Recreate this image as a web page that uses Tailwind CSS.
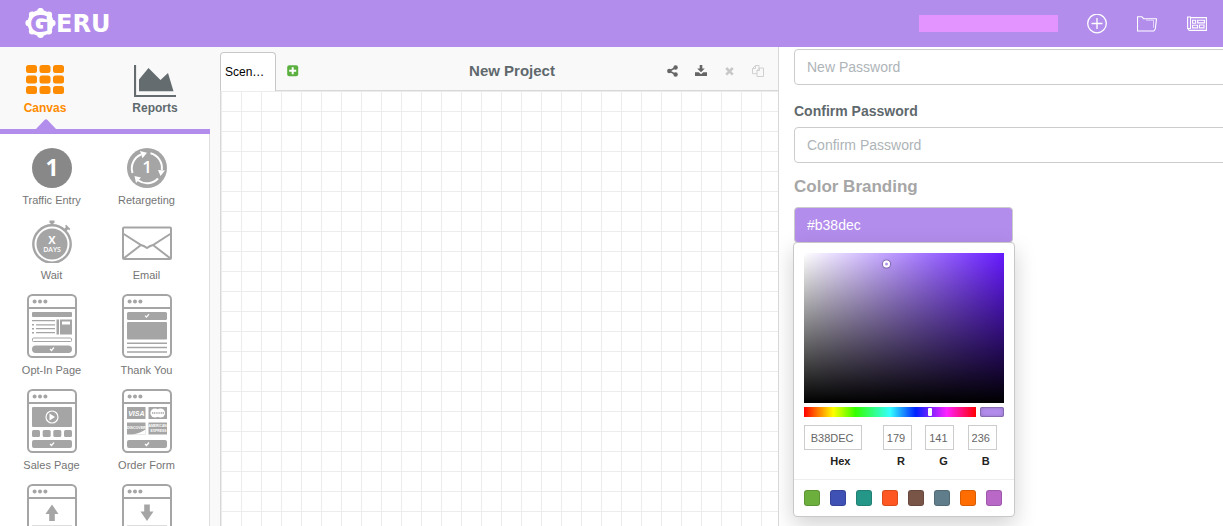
<!DOCTYPE html>
<html lang="en">
<head>
<meta charset="utf-8">
<title>Geru - New Project</title>
<script src="https://cdn.jsdelivr.net/npm/@tailwindcss/browser@4"></script>
</head>
<body class="flex h-screen flex-col overflow-hidden bg-white font-['Liberation_Sans',Arial,sans-serif] text-[#5f696d]">

<svg class="hidden" aria-hidden="true">
  <symbol id="frame" viewBox="0 0 50 64">
    <rect x="1" y="1" width="48" height="62" rx="4.5" fill="#fff" stroke="#a5a5a5" stroke-width="2"/>
    <path d="M1 14h48" stroke="#a5a5a5" stroke-width="2"/>
    <g fill="#a5a5a5"><circle cx="7.6" cy="7.6" r="2"/><circle cx="13" cy="7.6" r="2"/><circle cx="18.4" cy="7.6" r="2"/></g>
  </symbol>
</svg>

<header class="flex h-[47px] shrink-0 items-center bg-[#b38dec] pr-4 pl-6 text-white">
  <a href="#" aria-label="Geru home" class="flex">
    <svg width="96" height="32" viewBox="0 0 96 32" fill="#fff">
      <circle cx="16.500" cy="15" r="13"/>
      <circle cx="16.500" cy="3.200" r="3.300"/><circle cx="24.800" cy="6.700" r="3.300"/><circle cx="28.300" cy="15" r="3.300"/><circle cx="24.800" cy="23.300" r="3.300"/>
      <circle cx="16.500" cy="26.800" r="3.300"/><circle cx="8.200" cy="23.300" r="3.300"/><circle cx="4.700" cy="15" r="3.300"/><circle cx="8.200" cy="6.700" r="3.300"/>
      <g font-family="DejaVu Sans" font-weight="bold" font-size="24">
        <text x="6" y="23.500" font-size="23" fill="#b38dec">G</text>
        <text x="32" y="23.500">ERU</text>
      </g>
    </svg>
  </a>
  <div class="mr-[29px] ml-auto h-[17px] w-[139px] bg-[#e494ff]"></div>
  <nav class="flex items-center gap-[30px]">
    <button aria-label="New project">
      <svg width="20" height="20" viewBox="0 0 20 20" fill="none" stroke="#fff" stroke-width="1.300"><circle cx="10" cy="9.500" r="9.300"/><path d="M10 4v11M4.500 9.500h11"/></svg>
    </button>
    <button aria-label="Open project">
      <svg width="20" height="16" viewBox="0 0 20 16" fill="none" stroke="#fff" stroke-linejoin="round"><path d="M.5.800h4.500l1.700 2h12.800L18.300 13l-1.500 2H.5z" stroke-width="1.100"/><path d="M9 4.200h7.500v7.500" stroke-width="1" stroke-opacity=".6"/></svg>
    </button>
    <button aria-label="News">
      <svg width="20" height="16" viewBox="0 0 20 16" fill="none" stroke="#fff" stroke-width="1.100"><path d="M.6 1h2.900v11.500H.6zM3.500 1.600h15.900v12.800H2.200L.6 12.500M5.600 4.200h3v3h-3zM10.600 4.200h6.800v2.700h-6.800zM5.600 9.200h5v2.700h-5zM12.500 9h4.500v2.900h-4.500z"/></svg>
    </button>
  </nav>
</header>

<div class="flex min-h-0 flex-1">

  <aside class="w-[210px] shrink-0 overflow-hidden">
    <nav class="flex h-[87px] gap-5 border-b-[5px] border-[#b38dec] bg-[#f9f9f9] pt-[18px] text-xs leading-4 font-bold">
      <a href="#" class="flex w-[90px] flex-col items-center text-[#ff8c00]">
        <svg class="shrink-0" width="38" height="35" viewBox="0 0 38 35" fill="#ff8c00">
          <rect width="11" height="8" rx="2.500"/><rect x="13.500" width="11" height="8" rx="2.500"/><rect x="27" width="11" height="8" rx="2.500"/>
          <rect y="10.500" width="11" height="8" rx="2.500"/><rect x="13.500" y="10.500" width="11" height="8" rx="2.500"/><rect x="27" y="10.500" width="11" height="8" rx="2.500"/>
          <rect y="21" width="11" height="8" rx="2.500"/><rect x="13.500" y="21" width="11" height="8" rx="2.500"/><rect x="27" y="21" width="11" height="8" rx="2.500"/>
        </svg>
        Canvas
        <svg class="mt-[3px] shrink-0" width="22" height="10" viewBox="0 0 22 10" fill="#b38dec"><path d="M2 10 10.500 1q1.500-1.500 3 0L22 10z"/></svg>
      </a>
      <a href="#" class="flex w-[90px] flex-col items-center">
        <svg class="shrink-0" width="42" height="35" viewBox="0 0 42 35"><path d="M1 0v31h41" fill="none" stroke="#646c70" stroke-width="2.200"/><path d="M5 26.300V14.500L14.500 3l12 12L34 8l5.500 18.300z" fill="#646c70"/></svg>
        Reports
      </a>
    </nav>

    <ul class="grid grid-cols-[95px_95px] gap-y-[9px] border-r border-[#ddd] pt-[14px] pl-1 text-center text-[11px] leading-5 text-[#757575]">
      <li class="flex flex-col items-center gap-0.5">
        <svg width="40" height="40" viewBox="0 0 40 40"><circle cx="20" cy="20" r="20" fill="#888"/><text x="20" y="28" text-anchor="middle" font-family="Open Sans" font-weight="bold" font-size="23" fill="#fff">1</text></svg>
        Traffic Entry
      </li>
      <li class="flex flex-col items-center gap-0.5">
        <svg width="40" height="40" viewBox="0 0 40 40"><circle cx="20" cy="20" r="20" fill="#a5a5a5"/>
          <g fill="none" stroke="#fff" stroke-width="2"><path d="M5.500 25A15.200 15.200 0 0 1 14 6.500"/><path d="M23.500 5.200A15.200 15.200 0 0 1 34.800 22"/><path d="M31 30.500A15.200 15.200 0 0 1 11 32.300"/></g>
          <path d="M13 3l7 1.800-4.500 5.500zM31 22l7 .5-4.500 5.500zM7.500 28l6.500 1.500-5 5.500z" fill="#fff"/>
          <text x="20" y="25" text-anchor="middle" font-family="Open Sans" font-weight="600" font-size="17" fill="#fff">1</text></svg>
        Retargeting
      </li>
      <li class="flex flex-col items-center gap-0.5">
        <svg width="40" height="44" viewBox="0 0 40 44"><circle cx="20" cy="25" r="18.700" fill="none" stroke="#a5a5a5" stroke-width="2.400"/><circle cx="20" cy="25" r="15.500" fill="#a5a5a5"/><path d="M17.500 1.500h5v2.500h-1v3h-3V4h-1zM32 10l2-2-1-1 1.200-1.200 4.200 4.200-1.200 1.200-1-1-2 2z" fill="#a5a5a5"/>
          <g font-family="Open Sans" text-anchor="middle" fill="#fff"><text x="20" y="25" font-weight="bold" font-size="11">X</text><text x="20" y="33" font-weight="600" font-size="7">DAYS</text></g></svg>
        Wait
      </li>
      <li class="flex flex-col items-center gap-0.5">
        <svg width="50" height="44" viewBox="0 0 50 44" fill="none" stroke="#a5a5a5" stroke-width="2"><rect x="1" y="8.500" width="48" height="31.500" rx="1"/><path d="M1 14.500l18 11.500q3.500 1 6 3 2.500-2 6-3l18-11.500M1.500 39.500 19 26M48.500 39.500 31 26"/></svg>
        Email
      </li>
      <li class="flex flex-col items-center gap-0.5">
        <svg width="50" height="64" viewBox="0 0 50 64"><use href="#frame"/>
          <g fill="#a5a5a5"><rect x="5" y="18" width="40" height="5" rx="1"/><path d="M5 26h23v1.300H5zM9 30.200h19v1.300H9zM9 34h19v1.300H9zM9 38h19v1.300H9zM5 30h2v1.500H5zM5 34h2v1.500H5zM5 38h2v1.500H5zM29.500 25.500h2.500v15h-2.500zM33 25.500h12v15H33z"/><rect x="5" y="51.500" width="40" height="7.500" rx="3.700"/></g>
          <path d="M35 27.500h8v3h-8z" fill="#fff"/><rect x="5.500" y="44" width="39" height="3.500" rx="1" fill="none" stroke="#a5a5a5"/><path d="M23 55l1.500 1.500 2.500-3" fill="none" stroke="#fff" stroke-width="1.200"/></svg>
        Opt-In Page
      </li>
      <li class="flex flex-col items-center gap-0.5">
        <svg width="50" height="64" viewBox="0 0 50 64"><use href="#frame"/>
          <g fill="#a5a5a5"><rect x="5" y="18" width="40" height="8" rx="1.500"/><rect x="5" y="28" width="40" height="17.500" rx="1"/><path d="M5 48.500h40V50H5zM5 52.700h40v1.500H5zM5 57.300h40v1.500H5z"/></g><path d="M23 21.700l1.500 1.500 2.500-3" fill="none" stroke="#fff" stroke-width="1.200"/></svg>
        Thank You
      </li>
      <li class="flex flex-col items-center gap-0.5">
        <svg width="50" height="64" viewBox="0 0 50 64"><use href="#frame"/>
          <g fill="#a5a5a5"><rect x="5" y="18" width="40" height="20" rx="1"/><rect x="5" y="41" width="8" height="7" rx="1.500"/><rect x="15.700" y="41" width="8" height="7" rx="1.500"/><rect x="26.300" y="41" width="8" height="7" rx="1.500"/><rect x="37" y="41" width="8" height="7" rx="1.500"/><rect x="5" y="51" width="40" height="8" rx="2"/></g>
          <circle cx="25" cy="28" r="6" fill="none" stroke="#fff" stroke-width="1.200"/><path d="M22.500 24.500v7l5.500-3.500z" fill="#fff"/><path d="M23 55l1.500 1.500 2.500-3" fill="none" stroke="#fff" stroke-width="1.200"/></svg>
        Sales Page
      </li>
      <li class="flex flex-col items-center gap-0.5">
        <svg width="50" height="64" viewBox="0 0 50 64"><use href="#frame"/>
          <g fill="#a5a5a5"><path d="M5 18h18.500v12H5zM26.500 18H45v12H26.500zM5 33.500h18.500v12H5zM26.500 33.500H45v12H26.500z"/><rect x="5" y="51" width="40" height="8" rx="2"/></g>
          <g fill="#fff" font-family="Liberation Sans" font-weight="bold" text-anchor="middle"><text x="14.300" y="26.500" font-size="7" font-style="italic">VISA</text><text x="14.300" y="39.700" font-size="3.600">DISCOVER</text><text x="35.700" y="38" font-size="3.400">AMERICAN</text><text x="36.500" y="43" font-size="3.400">EXPRESS</text></g>
          <circle cx="33" cy="24" r="4.600" fill="#fff"/><circle cx="38.500" cy="24" r="4.600" fill="#fff"/><path d="M30 24h12" stroke="#a5a5a5" stroke-width="1.600" stroke-dasharray="1.200 .6"/><path d="M10 45.500q8-1 13.500-5v5z" fill="#fff"/><path d="M23 55l1.500 1.500 2.500-3" fill="none" stroke="#fff" stroke-width="1.200"/></svg>
        Order Form
      </li>
      <li class="flex flex-col items-center">
        <svg width="50" height="64" viewBox="0 0 50 64"><use href="#frame"/><path d="M25 20.500l6.500 9.500h-3.700v7h-5.600v-7h-3.700z" fill="#a5a5a5"/><path d="M5 41.500h40" stroke="#ddd"/></svg>
      </li>
      <li class="flex flex-col items-center">
        <svg width="50" height="64" viewBox="0 0 50 64"><use href="#frame"/><path d="M25 37l6.500-9.500h-3.700v-7h-5.600v7h-3.700z" fill="#a5a5a5"/><path d="M5 41.500h40" stroke="#ddd"/></svg>
      </li>
    </ul>
  </aside>

  <main class="flex min-w-0 flex-1 flex-col bg-[#f9f9f9] pl-[10px]">
    <div class="flex h-11 shrink-0 items-center border-b border-[#d8d8d8] pr-[14px]">
      <button class="-mb-px h-[39px] w-14 self-end rounded-t border border-b-0 border-[#c8c8c8] bg-white pl-1 text-left text-xs text-black">Scen…</button>
      <button class="mt-1 ml-[11px]" aria-label="Add scenario">
        <svg width="12" height="12" viewBox="0 0 12 12"><rect x=".2" y=".2" width="11" height="11" rx="2" fill="#5cb040"/><path d="M5.700 2.200v7M2.200 5.700h7" stroke="#fff" stroke-width="2"/></svg>
      </button>
      <h1 class="mt-1 flex-1 pl-[58px] text-center text-[15px] leading-5 font-bold">New Project</h1>
      <div class="mt-1 flex items-center">
        <button class="mr-[17px]" aria-label="Share"><svg width="11" height="12" viewBox="0 0 11 12" fill="#666"><circle cx="2.300" cy="6" r="2.200"/><circle cx="8.600" cy="2.500" r="2.200"/><circle cx="8.600" cy="9.500" r="2.200"/><path d="M8.600 2.500 2.300 6l6.300 3.500" fill="none" stroke="#666" stroke-width="1.500"/></svg></button>
        <button class="mr-[18px]" aria-label="Download"><svg width="12" height="12" viewBox="0 0 12 12" fill="#666"><path d="M4.700 0h2.600v3.500h2.500L6 7.200 2.200 3.500h2.500z"/><path d="M0 7.200h3.700L6 9.300l2.300-2.100H12V11H0z"/></svg></button>
        <button class="mr-[18px]" aria-label="Delete" disabled><svg width="9" height="12" viewBox="0 0 9 12"><path d="M1.200 3l6.600 6.600M7.800 3 1.200 9.600" stroke="#c8c8c8" stroke-width="2.500"/></svg></button>
        <button aria-label="Duplicate" disabled><svg width="12" height="12" viewBox="0 0 12 12" fill="#f9f9f9" stroke="#d0d0d0"><path d="M3.500.500h3.500v8.200H.500V3.500zM3.500.500v3H.500"/><path d="M7.500 3h4v8.500H5V5.500zM7.500 3v2.500H5"/></svg></button>
      </div>
    </div>
    <div class="flex-1 border-l border-[#d8d8d8] bg-white bg-[linear-gradient(to_right,#ececec_1px,transparent_1px),linear-gradient(to_bottom,#ececec_1px,transparent_1px)] bg-[size:20px_20px]"></div>
  </main>

  <section class="w-[445px] shrink-0 overflow-hidden border-l border-[#d8d8d8] bg-white pt-0.5 pl-[15px]">
    <form class="w-[calc(100%+16px)] text-sm">
      <input type="password" aria-label="New Password" placeholder="New Password" class="block h-9 w-full rounded border border-[#ccc] px-3 placeholder:text-[#aeb4b8]">
      <label for="confirm" class="mt-4 block leading-5 font-bold">Confirm Password</label>
      <input id="confirm" type="password" placeholder="Confirm Password" class="mt-1.5 block h-9 w-full rounded border border-[#ccc] px-3 placeholder:text-[#aeb4b8]">
      <h2 class="mt-[13px] mb-[9px] text-[17px] leading-[22px] font-bold text-[#a6a6a6]">Color Branding</h2>
      <input type="text" aria-label="Brand color" value="#b38dec" class="block h-9 w-[219px] rounded border border-[#ccc] bg-[#b38dec] px-3 text-white">

      <div class="-mt-px -ml-px w-[222px] rounded border border-[#c8c8c8] bg-white shadow-[0_8px_22px_rgba(0,0,0,0.18)]">
        <div class="p-[10px]">
          <div class="relative h-[150px] bg-[linear-gradient(to_top,#000,transparent),linear-gradient(to_right,#fff,#661aff)]">
            <span class="absolute top-[7%] left-[40%] size-[7px] -translate-x-px -translate-y-1/2 rounded-full border-2 border-white shadow-[0_0_1px_1px_rgba(0,0,0,0.3)]"></span>
          </div>
          <div class="mt-1 flex gap-1">
            <input type="range" aria-label="Hue" min="0" max="360" value="266" class="h-[10px] min-w-0 flex-1 appearance-none bg-[linear-gradient(to_right,#f00,#ff0_17%,#3f0_30%,#3ff_50%,#02f_65%,#f2f_83%,#f00)] [&::-webkit-slider-thumb]:h-2 [&::-webkit-slider-thumb]:w-1 [&::-webkit-slider-thumb]:appearance-none [&::-webkit-slider-thumb]:rounded-[1px] [&::-webkit-slider-thumb]:bg-white">
            <div class="h-[10px] w-6 rounded-[2px] bg-[#b38dec] shadow-[inset_0_0_0_1px_rgba(0,0,0,0.15),inset_0_0_4px_rgba(0,0,0,0.25)]"></div>
          </div>
          <div class="mt-2 flex gap-1.5 text-[11px]">
            <label class="flex-[2] text-center font-bold text-[#222]"><input value="B38DEC" class="mb-[3px] block h-[25px] w-4/5 border border-[#ccc] pr-0.5 text-center font-normal text-[#666]"><span class="block leading-4">Hex</span></label>
            <label class="flex-1 text-center font-bold text-[#222]"><input value="179" class="mb-[3px] block h-[25px] w-4/5 border border-[#ccc] pl-[3px] font-normal text-[#666]"><span class="block leading-4">R</span></label>
            <label class="flex-1 text-center font-bold text-[#222]"><input value="141" class="mb-[3px] block h-[25px] w-4/5 border border-[#ccc] pl-[3px] font-normal text-[#666]"><span class="block leading-4">G</span></label>
            <label class="flex-1 text-center font-bold text-[#222]"><input value="236" class="mb-[3px] block h-[25px] w-4/5 border border-[#ccc] pl-[3px] font-normal text-[#666]"><span class="block leading-4">B</span></label>
          </div>
        </div>
        <div class="flex gap-[10px] border-t border-[#eee] p-[10px]">
          <button type="button" aria-label="Green" class="size-4 rounded-[3px] border border-black/15 bg-[#6daf3c]"></button>
          <button type="button" aria-label="Indigo" class="size-4 rounded-[3px] border border-black/15 bg-[#3f51b5]"></button>
          <button type="button" aria-label="Teal" class="size-4 rounded-[3px] border border-black/15 bg-[#259788]"></button>
          <button type="button" aria-label="Deep orange" class="size-4 rounded-[3px] border border-black/15 bg-[#ff5722]"></button>
          <button type="button" aria-label="Brown" class="size-4 rounded-[3px] border border-black/15 bg-[#795548]"></button>
          <button type="button" aria-label="Blue gray" class="size-4 rounded-[3px] border border-black/15 bg-[#607d8b]"></button>
          <button type="button" aria-label="Orange" class="size-4 rounded-[3px] border border-black/15 bg-[#ff6d00]"></button>
          <button type="button" aria-label="Purple" class="size-4 rounded-[3px] border border-black/15 bg-[#ba68c8]"></button>
        </div>
      </div>
    </form>
  </section>
</div>
</body>
</html>
